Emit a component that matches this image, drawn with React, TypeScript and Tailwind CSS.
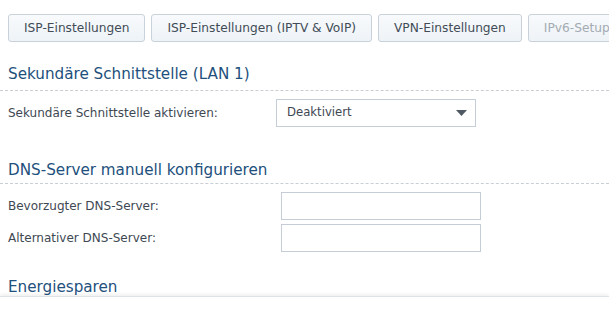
import React from "react";

/* Netzwerk-Einstellungen — Reiter oben, darunter die Abschnitte
   Sekundäre Schnittstelle, DNS-Server und Energiesparen. */

const REITER = [
  { label: "ISP-Einstellungen", aus: false },
  { label: "ISP-Einstellungen (IPTV & VoIP)", aus: false },
  { label: "VPN-Einstellungen", aus: false },
  { label: "IPv6-Setup", aus: true },
];

const schrift = { fontFamily: '"DejaVu Sans", Verdana, sans-serif' };

function Abschnitt({ titel, className }: { titel: string; className: string }) {
  return (
    <h2 className={"border-b border-dashed border-[#c8ced4] px-2 text-[15.2px] leading-5 font-normal text-[#22507c] " + className}>
      {titel}
    </h2>
  );
}

function Zeile({ label, children, className }: { label: string; children: React.ReactNode; className: string }) {
  return (
    <div className={"flex items-center " + className}>
      <span className="w-[276px] shrink-0 pl-2 text-[12px] text-[#3e4852]">{label}</span>
      {children}
    </div>
  );
}

export default function App() {
  return (
    <div className="relative h-[315px] w-[609px] overflow-hidden bg-white" style={schrift}>
      {/* Reiter */}
      <div className="flex gap-[6px] whitespace-nowrap pl-2 pt-[14px]">
        {REITER.map((r) => (
          <button
            key={r.label}
            type="button"
            className={
              "h-[28px] shrink-0 rounded-[3px] border border-[#c9d2db] bg-gradient-to-b from-[#f8fafc] to-[#eef3f7] px-[15px] text-[12.2px] " +
              (r.aus ? "text-[#a3abb3]" : "text-[#414c57]")
            }
          >
            {r.label}
          </button>
        ))}
      </div>

      <Abschnitt titel="Sekundäre Schnittstelle (LAN 1)" className="mt-[22px] pb-[6px]" />
      <Zeile label="Sekundäre Schnittstelle aktivieren:" className="mt-[8px]">
        <div className="flex h-[28px] w-[200px] items-center justify-between border border-[#c5ced8] bg-white pl-[10px] pr-[8px] text-[11.7px] text-[#3e4852]">
          <span>Deaktiviert</span>
          <svg width="11" height="6" viewBox="0 0 11 6" aria-hidden>
            <path d="M0 0h11L5.5 6z" fill="#4f5963" />
          </svg>
        </div>
      </Zeile>

      <Abschnitt titel="DNS-Server manuell konfigurieren" className="mt-[33px] pb-[3px]" />
      <Zeile label="Bevorzugter DNS-Server:" className="mt-[8px]">
        <input className="ml-[5px] h-[28px] w-[200px] border border-[#c5ced8] bg-white outline-none" />
      </Zeile>
      <Zeile label="Alternativer DNS-Server:" className="mt-[4px]">
        <input className="ml-[5px] h-[28px] w-[200px] border border-[#c5ced8] bg-white outline-none" />
      </Zeile>

      <h2 className="mt-[25px] px-2 text-[15.2px] leading-5 font-normal text-[#22507c]">Energiesparen</h2>

      {/* Fußleiste */}
      <div className="absolute bottom-0 left-0 right-0 h-[19px] border-t border-[#dfe3e7] bg-white shadow-[0_-2px_3px_rgba(0,0,0,0.06)]" />
    </div>
  );
}
